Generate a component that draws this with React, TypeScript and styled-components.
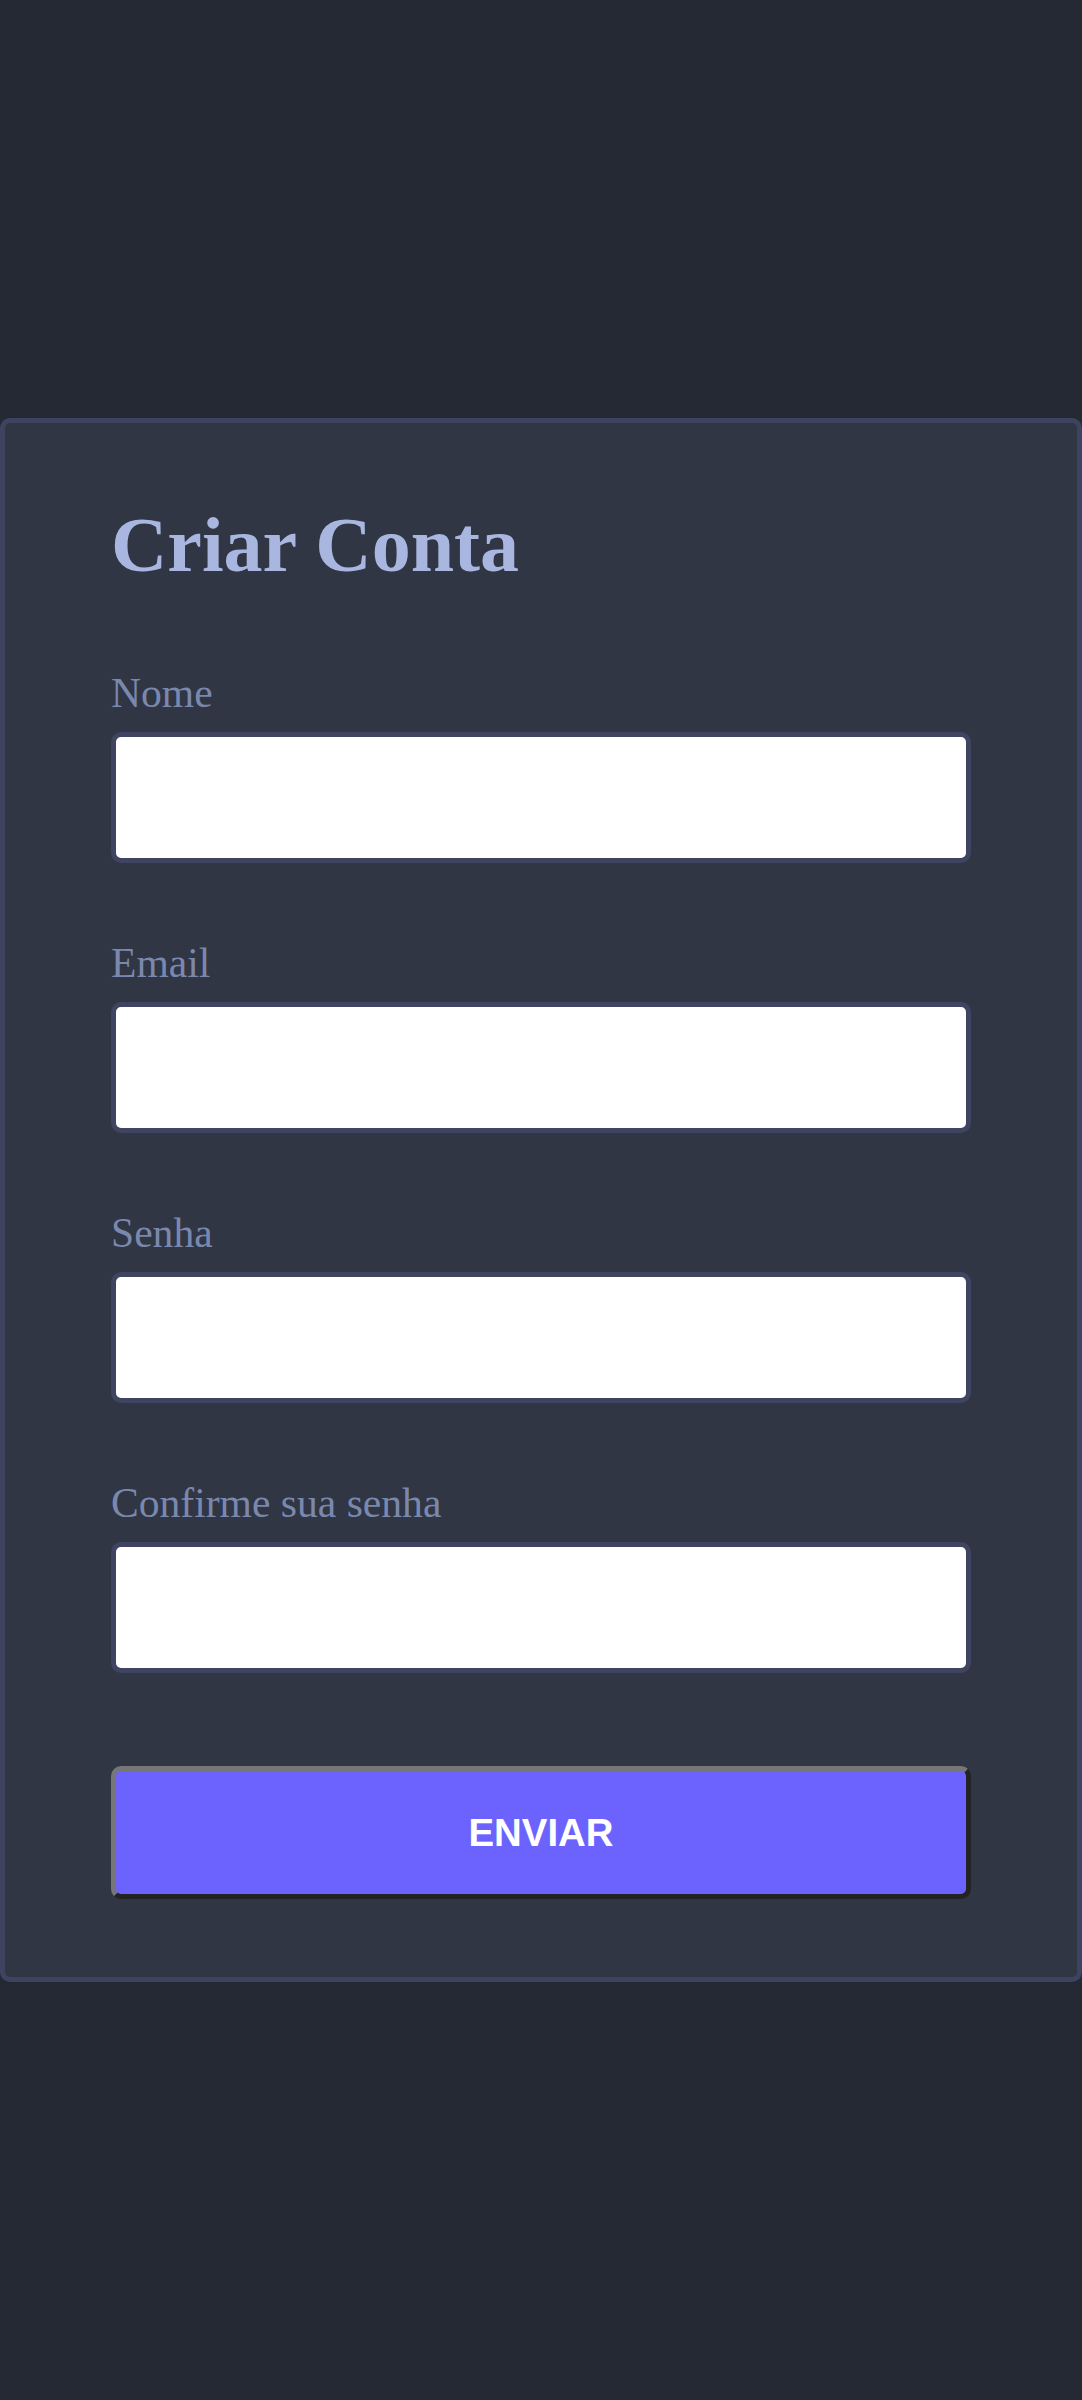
import React from "react";
import styled, { createGlobalStyle } from "styled-components";

const GlobalStyle = createGlobalStyle`
  html, body {
    margin: 0;
    padding: 0;
    background: #252934;
  }
  * { box-sizing: border-box; }
`;

const Page = styled.div`
  min-height: 100vh;
  display: flex;
  align-items: center;
  justify-content: center;
  background: #252934;
`;

const Card = styled.form`
  width: 100%;
  background: #303644;
  border: 5px solid #3e4360;
  border-radius: 10px;
  padding: 77px 106px 78px;
  display: flex;
  flex-direction: column;
`;

const Title = styled.h1`
  margin: 0 0 79px;
  font-family: "Liberation Serif", "Times New Roman", serif;
  font-weight: 700;
  font-size: 78px;
  line-height: normal;
  color: #a9b7e0;
`;

const Field = styled.div`
  display: flex;
  flex-direction: column;
  gap: 15px;
  margin-bottom: ${(p: { $last?: boolean }) => (p.$last ? "93px" : "76px")};
`;

const Label = styled.label`
  font-family: "Liberation Serif", "Times New Roman", serif;
  font-size: 41.6px;
  line-height: normal;
  color: #7b88ae;
`;

const Input = styled.input`
  width: 100%;
  height: 131px;
  border: 5px solid #3f4461;
  border-radius: 10px;
  background: #ffffff;
  padding: 0 20px;
  font-family: "Liberation Sans", Arial, sans-serif;
  font-size: 32px;
  outline: none;
`;

const Button = styled.button`
  width: 100%;
  height: 133px;
  background: #6c63ff;
  border-style: solid;
  border-width: 5px;
  border-color: #767676 #232323 #232323 #767676;
  border-radius: 10px;
  color: #ffffff;
  font-family: "Liberation Sans", Arial, sans-serif;
  font-weight: 700;
  font-size: 38.4px;
  cursor: pointer;
`;

const fields = [
  { id: "nome", label: "Nome", type: "text" },
  { id: "email", label: "Email", type: "email" },
  { id: "senha", label: "Senha", type: "password" },
  { id: "confirme", label: "Confirme sua senha", type: "password" },
];

export default function App() {
  return (
    <>
      <GlobalStyle />
      <Page>
        <Card onSubmit={(e) => e.preventDefault()}>
          <Title>Criar Conta</Title>
          {fields.map((f, i) => (
            <Field key={f.id} $last={i === fields.length - 1}>
              <Label htmlFor={f.id}>{f.label}</Label>
              <Input id={f.id} type={f.type} />
            </Field>
          ))}
          <Button type="submit">ENVIAR</Button>
        </Card>
      </Page>
    </>
  );
}
